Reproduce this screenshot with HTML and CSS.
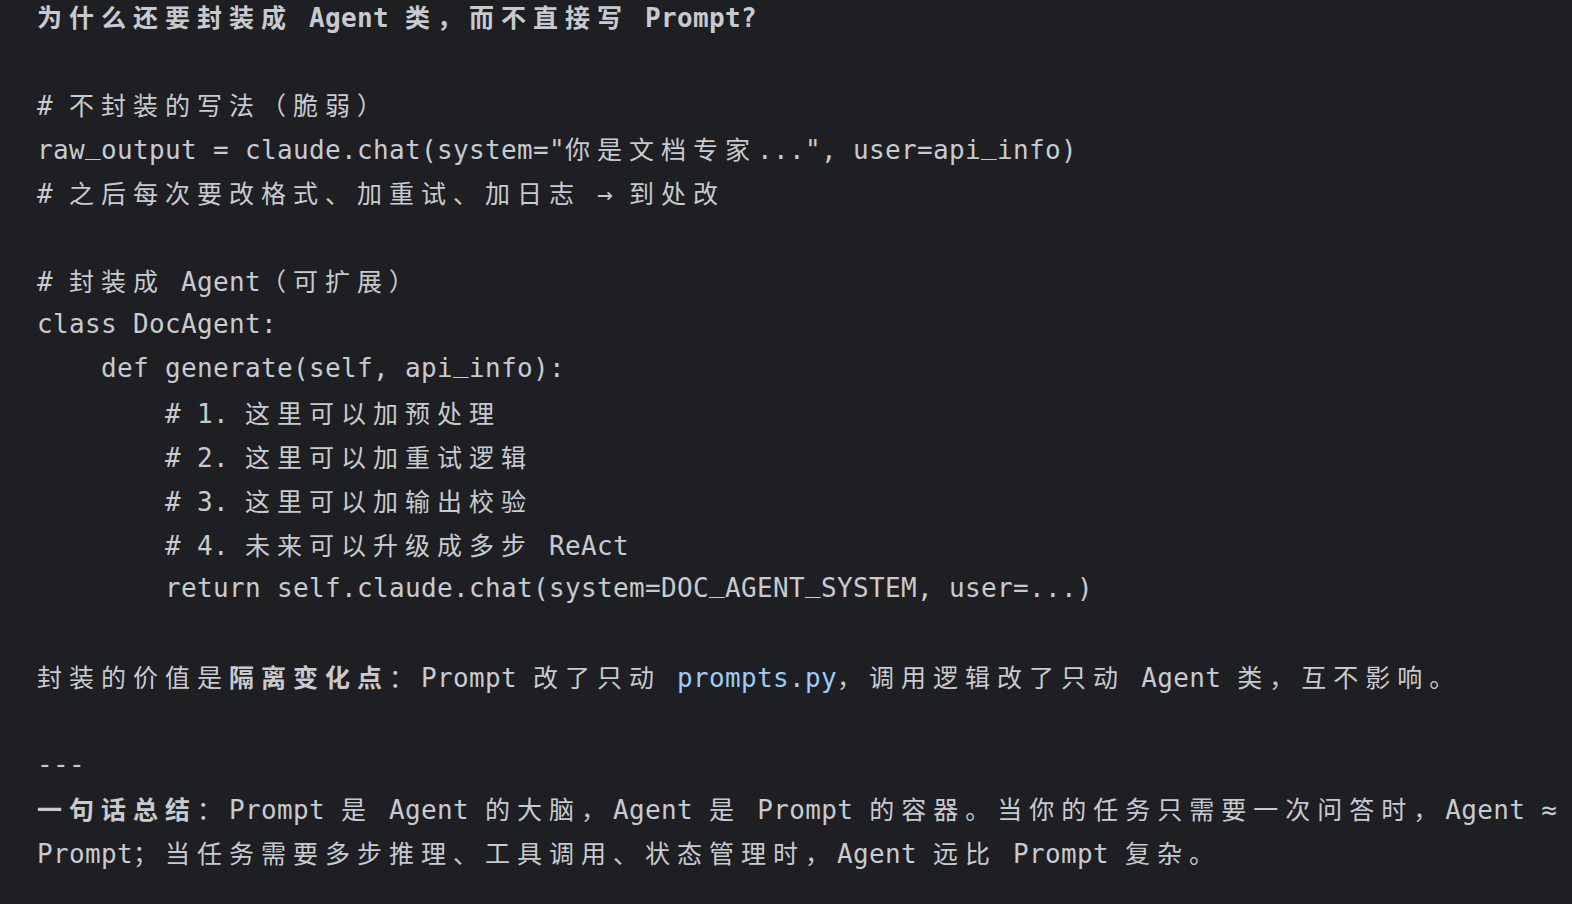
FILE: index.html
```html
<!DOCTYPE html>
<html lang="zh-CN">
<head>
<meta charset="utf-8">
<title>Agent vs Prompt</title>
<link rel="stylesheet" href="styles.css">
</head>
<body>
<main class="doc">
  <div class="line title"><span class="c">为什么还要封装成</span> Agent <span class="c">类，而不直接写</span> Prompt?</div>
  <div class="line"> </div>
  <div class="line"># <span class="c">不封装的写法（脆弱）</span></div>
  <div class="line">raw<span class="u">_</span>output = claude.chat(system="<span class="c">你是文档专家</span>...", user=api<span class="u">_</span>info)</div>
  <div class="line"># <span class="c">之后每次要改格式、加重试、加日志</span> → <span class="c">到处改</span></div>
  <div class="line"> </div>
  <div class="line"># <span class="c">封装成</span> Agent<span class="c">（可扩展）</span></div>
  <div class="line">class DocAgent:</div>
  <div class="line">    def generate(self, api<span class="u">_</span>info):</div>
  <div class="line">        # 1. <span class="c">这里可以加预处理</span></div>
  <div class="line">        # 2. <span class="c">这里可以加重试逻辑</span></div>
  <div class="line">        # 3. <span class="c">这里可以加输出校验</span></div>
  <div class="line">        # 4. <span class="c">未来可以升级成多步</span> ReAct</div>
  <div class="line">        return self.claude.chat(system=DOC<span class="u">_</span>AGENT<span class="u">_</span>SYSTEM, user=...)</div>
  <div class="line"> </div>
  <div class="line"><span class="c">封装的价值是<b class="strong">隔离变化点</b>：</span>Prompt <span class="c">改了只动</span> <code class="code">prompts.py</code><span class="c">，调用逻辑改了只动</span> Agent <span class="c">类，互不影响。</span></div>
  <div class="line"> </div>
  <div class="line">---</div>
  <div class="line"><span class="c"><b class="strong">一句话总结</b>：</span>Prompt <span class="c">是</span> Agent <span class="c">的大脑，</span>Agent <span class="c">是</span> Prompt <span class="c">的容器。当你的任务只需要一次问答时，</span>Agent ≈</div>
  <div class="line">Prompt<span class="c">；当任务需要多步推理、工具调用、状态管理时，</span>Agent <span class="c">远比</span> Prompt <span class="c">复杂。</span></div>
</main>
</body>
</html>
```

FILE: styles.css
```css
html, body {
  margin: 0;
  padding: 0;
  background: #1e1f22;
}

body {
  width: 1572px;
  height: 904px;
  overflow: hidden;
}

.doc {
  margin-top: -6px;
  padding-left: 37px;
  color: #c9cacf;
  font-family: "DejaVu Sans Mono", "Liberation Mono", monospace;
  font-size: 26px;
  letter-spacing: 0.347px;
}

.line {
  height: 44px;
  line-height: 44px;
  white-space: pre;
}

.title {
  font-weight: bold;
}

.c {
  font-family: "Noto Sans CJK SC", "Noto Sans", sans-serif;
  font-size: 25px;
  letter-spacing: 7px;
}

.u {
  line-height: 0;
  vertical-align: 5px;
}

.strong {
  font-weight: bold;
}

.code {
  font-family: inherit;
  font-size: inherit;
  letter-spacing: inherit;
  color: #9fcbf3;
}
```
